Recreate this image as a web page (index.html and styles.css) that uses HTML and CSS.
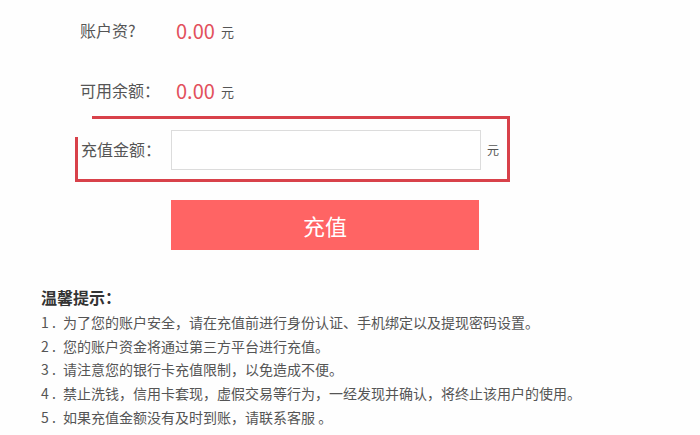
FILE: index.html
```html
<!DOCTYPE html>
<html lang="zh-CN">
<head>
  <meta charset="UTF-8" />
  <title>充值</title>
  <link rel="stylesheet" href="styles.css">
</head>
<body>
  <div class="recharge">
    <div class="info-row first">
      <span class="label">账户资?</span>
      <span class="money">0.00</span>
      <span class="unit">元</span>
    </div>
    <div class="info-row">
      <span class="label">可用余额：</span>
      <span class="money">0.00</span>
      <span class="unit">元</span>
    </div>

    <div class="amount-box">
      <label class="amount-label" for="amount">充值金额：</label>
      <input type="text" id="amount" class="amount-input" />
      <span class="unit small">元</span>
    </div>

    <button class="btn-recharge">充值</button>
  </div>

  <div class="tips">
    <h4>温馨提示：</h4>
    <ul>
      <li><span class="num">1 .</span>为了您的账户安全，请在充值前进行身份认证、手机绑定以及提现密码设置。</li>
      <li><span class="num">2 .</span>您的账户资金将通过第三方平台进行充值。</li>
      <li><span class="num">3 .</span>请注意您的银行卡充值限制，以免造成不便。</li>
      <li><span class="num">4 .</span>禁止洗钱，信用卡套现，虚假交易等行为，一经发现并确认，将终止该用户的使用。</li>
      <li><span class="num">5 .</span>如果充值金额没有及时到账，请联系客服 。</li>
    </ul>
  </div>
</body>
</html>
```

FILE: styles.css
```css
    body {
      margin: 0;
      background: #fefefe;
      color: #555;
      font-family: "Noto Sans CJK SC", "Noto Sans", sans-serif;
      font-size: 14px;
    }

    .recharge {
      padding-top: 10px;
    }

    .info-row {
      display: flex;
      align-items: center;
      height: 40px;
      padding-left: 80px;
      margin-bottom: 20px;
    }

    .info-row .label {
      width: 96px;
      font-size: 16px;
      color: #555;
    }

    .money {
      font-size: 20px;
      color: #e2505c;
    }

    .unit {
      margin-left: 6px;
      font-size: 13px;
      color: #555;
      padding-top: 3px;
    }

    .unit.small {
      font-size: 12px;
      padding-top: 0;
    }

    .amount-box {
      position: relative;
      display: flex;
      align-items: center;
      box-sizing: border-box;
      width: 435px;
      height: 66px;
      margin: -14px 0 0 75px;
      border: 3px solid #d8414a;
    }

    /* the annotation stroke leaves the top-left corner open */
    .amount-box::before {
      content: "";
      position: absolute;
      left: -3px;
      top: -3px;
      width: 17px;
      height: 21px;
      background: #fefefe;
    }

    .amount-label {
      width: 90px;
      padding-left: 3px;
      font-size: 16px;
      color: #555;
    }

    .amount-input {
      box-sizing: border-box;
      width: 310px;
      height: 40px;
      margin: 1px 0 0;
      border: 1px solid #dcdcdc;
      background: #fff;
      outline: none;
    }

    .btn-recharge {
      display: block;
      width: 308px;
      height: 50px;
      margin: 18px 0 0 171px;
      border: none;
      background: #ff6464;
      color: #fff;
      font-family: inherit;
      font-size: 22px;
      cursor: pointer;
    }

    .tips {
      padding-left: 41px;
      margin-top: 35px;
    }

    .tips h4 {
      margin: 0;
      font-size: 16px;
      line-height: 24px;
      color: #333;
    }

    .tips ul {
      list-style: none;
      margin: 2px 0 0;
      padding: 0;
    }

    .tips li {
      line-height: 23.7px;
      font-size: 14px;
      color: #555;
    }

    .num {
      display: inline-block;
      width: 22px;
    }
```
